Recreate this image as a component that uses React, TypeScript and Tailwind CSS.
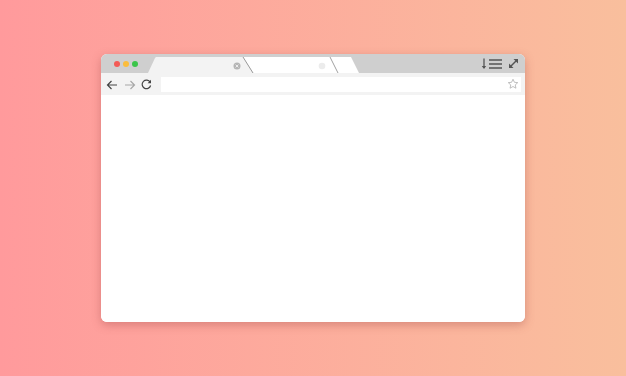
import React from "react";

export default function App() {
  return (
    <div className="w-[626px] h-[376px] bg-gradient-to-r from-[#ff9a9c] to-[#f9bf9d] flex items-start justify-center pt-[54px] font-['Liberation_Sans',sans-serif]">
      <div className="w-[424px] h-[268px] rounded-[6px] overflow-hidden bg-white shadow-[0_3px_10px_rgba(150,60,60,0.35)] flex flex-col">
        {/* tab bar */}
        <div className="h-[19px] bg-[#cfcfcf] flex items-stretch relative">
          <div className="flex items-center gap-[3px] pl-[13px] w-[47px]">
            <span className="w-[6px] h-[6px] rounded-full bg-[#f35b56]" />
            <span className="w-[6px] h-[6px] rounded-full bg-[#fbbd3c]" />
            <span className="w-[6px] h-[6px] rounded-full bg-[#3bc54a]" />
          </div>
          <svg width="215" height="19" viewBox="0 0 215 19" className="block">
            <polygon points="0,19 7,4 8,3 95,3 105,19" fill="#f3f3f3" />
            <polygon points="95,3 182,3 190,19 105,19" fill="#ffffff" />
            <polygon points="182,3 203,3 211,19 190,19" fill="#ffffff" />
            <line x1="95" y1="3" x2="105" y2="19" stroke="#8f8f8f" strokeWidth="0.9" />
            <line x1="182" y1="3" x2="190" y2="19" stroke="#9a9a9a" strokeWidth="0.9" />
            <circle cx="89" cy="12" r="3.5" fill="#b5b5b5" />
            <path d="M87.6 10.6 L90.4 13.4 M90.4 10.6 L87.6 13.4" stroke="#f3f3f3" strokeWidth="0.9" />
            <circle cx="174" cy="12" r="3.3" fill="#ececec" />
          </svg>
          <div className="flex-1" />
          <div className="flex items-center gap-[5px] pr-[6px]">
            <svg width="22" height="12" viewBox="0 0 22 12">
              <path d="M3 0.5 V10" stroke="#555" strokeWidth="1.3" />
              <path d="M0.8 8 L3 11 L5.2 8 Z" fill="#555" />
              <path d="M8 2 H21 M8 6 H21 M8 10 H21" stroke="#555" strokeWidth="1.5" />
            </svg>
            <svg width="11" height="11" viewBox="0 0 11 11">
              <path d="M2 9 L9 2" stroke="#555" strokeWidth="1.4" />
              <path d="M5.5 1 H10 V5.5 Z" fill="#555" />
              <path d="M1 5.5 V10 H5.5 Z" fill="#555" />
            </svg>
          </div>
        </div>
        {/* toolbar */}
        <div className="h-[22px] bg-[#f3f3f3] flex items-center">
          <div className="flex items-center w-[60px] pl-[5px] gap-[6px] pt-[1px]">
            <svg width="12" height="10" viewBox="0 0 12 10">
              <path d="M11 5 H1.5 M5.5 1 L1.5 5 L5.5 9" stroke="#444" strokeWidth="1.2" fill="none" />
            </svg>
            <svg width="12" height="10" viewBox="0 0 12 10">
              <path d="M1 5 H10.5 M6.5 1 L10.5 5 L6.5 9" stroke="#a8a8a8" strokeWidth="1.2" fill="none" />
            </svg>
            <svg width="11" height="11" viewBox="0 0 11 11" className="-ml-[1px]">
              <path d="M9.2 3.3 A4.3 4.3 0 1 0 9.6 6.5" stroke="#444" strokeWidth="1.2" fill="none" />
              <path d="M10 0.8 V4.2 H6.6 Z" fill="#444" />
            </svg>
          </div>
          <div className="flex-1 h-[15px] bg-white mr-[4px] flex items-center justify-end pr-[2px]">
            <svg width="12" height="12" viewBox="0 0 24 24">
              <path d="M12 2.5 L14.9 8.6 L21.5 9.3 L16.5 13.8 L17.9 20.4 L12 17 L6.1 20.4 L7.5 13.8 L2.5 9.3 L9.1 8.6 Z" fill="none" stroke="#b0b0b0" strokeWidth="1.6" strokeLinejoin="round" />
            </svg>
          </div>
        </div>
        <div className="flex-1 bg-white" />
      </div>
    </div>
  );
}
